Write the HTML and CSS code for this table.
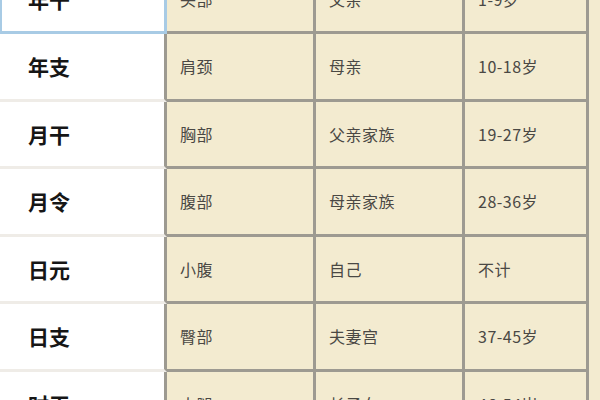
FILE: index.html
```html
<!DOCTYPE html>
<html lang="zh">
<head>
<meta charset="utf-8">
<link rel="stylesheet" href="styles.css">
</head>
<body>
<div class="table">
  <div class="cell head selected">年干</div><div class="cell">头部</div><div class="cell">父亲</div><div class="cell">1-9岁</div>
  <div class="cell head">年支</div><div class="cell">肩颈</div><div class="cell">母亲</div><div class="cell">10-18岁</div>
  <div class="cell head">月干</div><div class="cell">胸部</div><div class="cell">父亲家族</div><div class="cell">19-27岁</div>
  <div class="cell head">月令</div><div class="cell">腹部</div><div class="cell">母亲家族</div><div class="cell">28-36岁</div>
  <div class="cell head">日元</div><div class="cell">小腹</div><div class="cell">自己</div><div class="cell">不计</div>
  <div class="cell head">日支</div><div class="cell">臀部</div><div class="cell">夫妻宫</div><div class="cell">37-45岁</div>
  <div class="cell head">时干</div><div class="cell">大腿</div><div class="cell">长子女</div><div class="cell">46-54岁</div>
</div>
</body>
</html>
```
FILE: styles.css
```css
html, body {
  margin: 0;
  padding: 0;
  height: 100%;
  overflow: hidden;
  background: #f3ebd0;
}
.table {
  display: grid;
  grid-template-columns: 167px 149px 149px 124px;
  grid-auto-rows: 67.5px;
  margin-top: -33.5px;
  font-family: "Noto Sans CJK SC", "Noto Sans", sans-serif;
}
.cell {
  box-sizing: border-box;
  display: flex;
  align-items: center;
  padding-left: 13px;
  background: #f3ebd0;
  border-right: 3px solid #9d9a91;
  border-bottom: 3px solid #9d9a91;
  font-size: 16px;
  color: #4a4844;
  letter-spacing: 0.5px;
}
.cell.head {
  background: #ffffff;
  padding-left: 28px;
  font-size: 21px;
  font-weight: bold;
  color: #161616;
  letter-spacing: 0;
  border-bottom-color: #efece7;
}
.cell.head.selected {
  border-right-color: #a8cbe5;
  border-bottom-color: #a8cbe5;
  box-shadow: inset 2px 0 0 #a8cbe5;
}
```
